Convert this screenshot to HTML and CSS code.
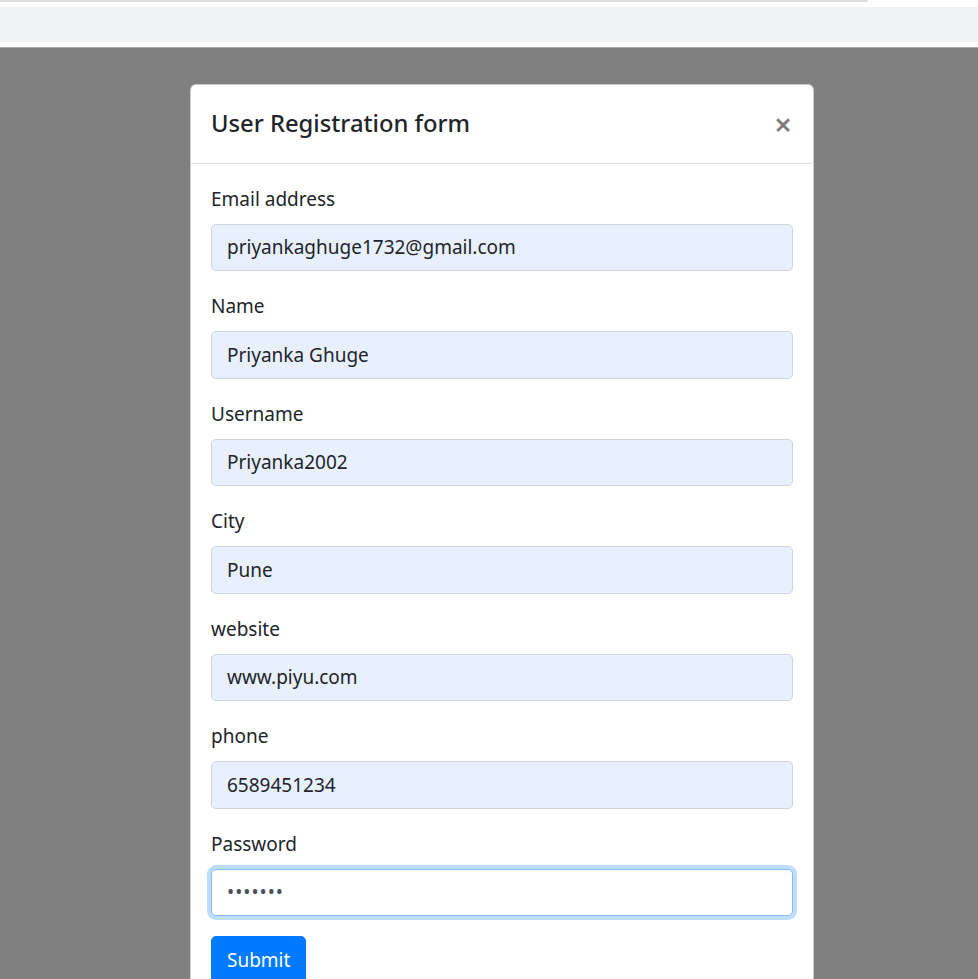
FILE: index.html
```html
<!DOCTYPE html>
<html>
<head>
<meta charset="utf-8">
<link rel="stylesheet" href="styles.css">
</head>
<body>
<div class="chrome">
  <div class="chrome-line"></div>
  <div class="chrome-band"></div>
</div>
<div class="backdrop">
  <div class="modal">
    <div class="modal-header">
      <h5 class="modal-title">User Registration form</h5>
      <button class="close" type="button">&times;</button>
    </div>
    <form class="modal-body">
      <div class="form-group">
        <label class="label">Email address</label>
        <input class="input autofill" type="text" value="priyankaghuge1732@gmail.com">
      </div>
      <div class="form-group">
        <label class="label">Name</label>
        <input class="input autofill" type="text" value="Priyanka Ghuge">
      </div>
      <div class="form-group">
        <label class="label">Username</label>
        <input class="input autofill" type="text" value="Priyanka2002">
      </div>
      <div class="form-group">
        <label class="label">City</label>
        <input class="input autofill" type="text" value="Pune">
      </div>
      <div class="form-group">
        <label class="label">website</label>
        <input class="input autofill" type="text" value="www.piyu.com">
      </div>
      <div class="form-group">
        <label class="label">phone</label>
        <input class="input autofill" type="text" value="6589451234">
      </div>
      <div class="form-group">
        <label class="label">Password</label>
        <input class="input focused" type="password" value="1234567">
      </div>
      <button class="btn" type="button">Submit</button>
    </form>
  </div>
</div>
</body>
</html>
```
FILE: styles.css
```css
* { box-sizing: border-box; }
html, body { margin: 0; padding: 0; height: 100%; overflow: hidden; }
body {
  font-family: "Noto Sans", "Open Sans", sans-serif;
  font-size: 19px;
  line-height: 30px;
  color: #212529;
  background: #808080;
}
.chrome {
  height: 48px;
  background: #fff;
  border-bottom: 1px solid #a9a9a9;
}
.chrome-line {
  width: 868px;
  height: 2px;
  background: #dadce0;
  border-radius: 0 0 2px 0;
}
.chrome-band {
  margin-top: 5px;
  height: 35px;
  background: #f1f2f4;
}
.backdrop {
  padding: 36px 0 0 190px;
}
.modal {
  width: 624px;
  background: #fff;
  border: 1px solid rgba(0,0,0,.2);
  border-radius: 6px;
  height: 1000px;
}
.modal-header {
  display: flex;
  align-items: flex-start;
  justify-content: space-between;
  padding: 20px;
  border-bottom: 1px solid #dee2e6;
}
.modal-title {
  margin: 0;
  font-size: 23.75px;
  font-weight: 500;
  line-height: 37.5px;
}
.close {
  background: none;
  border: 0;
  padding: 20px;
  margin: -16px -19px -20px auto;
  font-family: inherit;
  font-size: 31px;
  font-weight: 600;
  line-height: 1;
  color: #000;
  opacity: .5;
}
.modal-body {
  display: block;
  padding: 20px;
  margin: 0;
}
.form-group { margin-bottom: 20px; }
.label {
  display: inline-block;
  margin-bottom: 10px;
}
.input {
  display: block;
  width: 100%;
  height: 47.5px;
  padding: 7.5px 15px;
  font-family: inherit;
  font-size: 19px;
  line-height: 30px;
  color: #495057;
  background: #fff;
  border: 1px solid #ced4da;
  border-radius: 5px;
  outline: none;
}
.input.autofill { background: #e8f0fe; color: #212529; }
.input.focused {
  border-color: #80bdff;
  box-shadow: 0 0 0 4px rgba(0,123,255,.25);
  letter-spacing: 1px;
}
.btn {
  display: inline-block;
  font-family: inherit;
  font-size: 19px;
  line-height: 30px;
  padding: 7.5px 15px;
  color: #fff;
  background: #007bff;
  border: 1px solid #007bff;
  border-radius: 5px;
}
```
